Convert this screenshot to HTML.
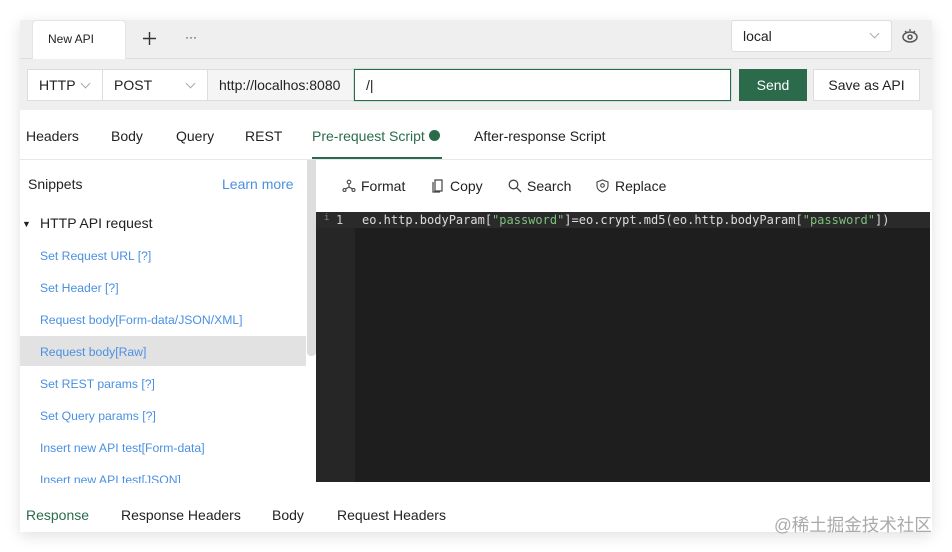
<!DOCTYPE html>
<html><head><meta charset="utf-8"><style>
*{box-sizing:border-box;margin:0;padding:0}
body{width:952px;height:552px;background:#fff;font-family:"Liberation Sans",sans-serif;font-size:14px;color:#222;position:relative;overflow:hidden}
.abs{position:absolute}
.win{position:absolute;left:20px;top:20px;width:912px;height:512px;background:#fff;box-shadow:0 4px 14px rgba(0,0,0,.12)}
.sel{position:absolute;background:#fff;border:1px solid #ddd;font-size:14px;padding-left:11px;line-height:31px}
.chev{position:absolute;width:7px;height:7px;border-right:1px solid #aaa;border-bottom:1px solid #aaa;transform:rotate(45deg)}
.tab{position:absolute;top:128px;font-size:14px}
.tool{position:absolute;top:178px;font-size:14px}
.sn{position:absolute;left:40px;font-size:12.2px;color:#4a90e2}
.mono{font-family:"DejaVu Sans Mono","Liberation Mono",monospace;font-size:12px}
</style></head><body>
<div class="win"></div>
<div class="abs" style="left:20px;top:20px;width:912px;height:90px;background:#efefef"></div>
<div class="abs" style="left:20px;top:58px;width:912px;height:1px;background:#ddd"></div>
<div class="abs" style="left:32px;top:20px;width:94px;height:39px;background:#fff;border-radius:4px 4px 0 0;border:1px solid #e4e4e4;border-bottom:none"></div>
<div class="abs" style="left:48px;top:32px;font-size:12px">New API</div>
<svg class="abs" style="left:143px;top:32px" width="13" height="13" viewBox="0 0 13 13"><path d="M6.5 0v13M0 6.5h13" stroke="#333" stroke-width="1.4"/></svg>
<div class="abs" style="left:185px;top:30px;font-size:12px;color:#333">···</div>
<div class="sel" style="left:731px;top:20px;width:161px;height:32px;border-radius:3px">local</div>
<div class="chev" style="left:871px;top:30px"></div>
<svg class="abs" style="left:901px;top:28px" width="18" height="17" viewBox="0 0 18 17"><ellipse cx="9" cy="9" rx="7" ry="5" fill="none" stroke="#555" stroke-width="1.5"/><circle cx="9" cy="9" r="2" fill="none" stroke="#555" stroke-width="1.5"/><path d="M4 3l1.5 1.5M14 3l-1.5 1.5M9 1v2" stroke="#555" stroke-width="1.3"/></svg>

<div class="sel" style="left:27px;top:69px;width:76px;height:32px">HTTP</div>
<div class="chev" style="left:82px;top:80px"></div>
<div class="sel" style="left:102px;top:69px;width:106px;height:32px">POST</div>
<div class="chev" style="left:187px;top:80px"></div>
<div class="abs" style="left:207px;top:69px;width:147px;height:32px;background:#f5f5f5;border:1px solid #ddd;line-height:31px;padding-left:11px;font-size:14px">http://localhos:8080</div>
<div class="abs" style="left:354px;top:69px;width:377px;height:32px;background:#fff;border:1px solid #2b6b4c;box-shadow:0 0 0 1px #cfe3d8;padding-left:11px;line-height:30px">/|</div>
<div class="abs" style="left:739px;top:69px;width:68px;height:32px;background:#2b6b4c;color:#fff;text-align:center;line-height:32px">Send</div>
<div class="abs" style="left:813px;top:69px;width:107px;height:32px;background:#fff;border:1px solid #ddd;text-align:center;line-height:30px">Save as API</div>

<div class="tab" style="left:26px">Headers</div>
<div class="tab" style="left:111px">Body</div>
<div class="tab" style="left:176px">Query</div>
<div class="tab" style="left:245px">REST</div>
<div class="tab" style="left:312px;color:#2b6b4c">Pre-request Script</div>
<div class="abs" style="left:429px;top:130px;width:11px;height:11px;border-radius:50%;background:#2b6b4c"></div>
<div class="abs" style="left:312px;top:157px;width:130px;height:2px;background:#2b6b4c"></div>
<div class="tab" style="left:474px">After-response Script</div>
<div class="abs" style="left:20px;top:159px;width:912px;height:1px;background:#e8e8e8"></div>

<div class="abs" style="left:28px;top:176px">Snippets</div>
<div class="abs" style="left:222px;top:176px;color:#4a90e2">Learn more</div>
<div class="abs" style="left:22px;top:219px;font-size:9px">▼</div>
<div class="abs" style="left:40px;top:215px">HTTP API request</div>
<div class="abs" style="left:20px;top:336px;width:286px;height:30px;background:#e2e2e2"></div>
<div class="sn" style="top:249px">Set Request URL [?]</div>
<div class="sn" style="top:281px">Set Header [?]</div>
<div class="sn" style="top:313px">Request body[Form-data/JSON/XML]</div>
<div class="sn" style="top:345px">Request body[Raw]</div>
<div class="sn" style="top:377px">Set REST params [?]</div>
<div class="sn" style="top:409px">Set Query params [?]</div>
<div class="sn" style="top:441px">Insert new API test[Form-data]</div>
<div class="abs" style="left:20px;top:470px;width:290px;height:13px;overflow:hidden"><div class="sn" style="left:20px;top:3px">Insert new API test[JSON]</div></div>
<div class="abs" style="left:307px;top:160px;width:9px;height:196px;background:#ddd;border-radius:0 0 4px 4px"></div>
<div class="abs" style="left:316px;top:160px;width:614px;height:52px;background:#fff"></div>

<svg class="abs" style="left:342px;top:179px" width="14" height="14" viewBox="0 0 14 14" fill="none" stroke="#444" stroke-width="1.1"><circle cx="7" cy="3" r="1.8"/><circle cx="2.5" cy="11" r="1.5"/><circle cx="11.5" cy="11" r="1.5"/><path d="M7 5v3M7 8L3.5 10M7 8l3.5 2"/></svg>
<div class="tool" style="left:361px">Format</div>
<svg class="abs" style="left:431px;top:179px" width="13" height="14" viewBox="0 0 13 14" fill="none" stroke="#444" stroke-width="1.2"><path d="M4 1h7v11H4z"/><path d="M2 3v10h7"/></svg>
<div class="tool" style="left:450px">Copy</div>
<svg class="abs" style="left:508px;top:179px" width="14" height="14" viewBox="0 0 14 14" fill="none" stroke="#444" stroke-width="1.3"><circle cx="5.5" cy="5.5" r="4.3"/><path d="M8.7 8.7L13 13"/></svg>
<div class="tool" style="left:527px">Search</div>
<svg class="abs" style="left:596px;top:179px" width="13" height="14" viewBox="0 0 13 14" fill="none" stroke="#444" stroke-width="1.1"><path d="M6.5 1L12 3v4c0 3-2.5 5-5.5 6C3.5 12 1 10 1 7V3z"/><circle cx="6.5" cy="6.5" r="1.8"/></svg>
<div class="tool" style="left:615px">Replace</div>

<div class="abs" style="left:316px;top:212px;width:614px;height:270px;background:#1e1e1e"></div>
<div class="abs" style="left:316px;top:212px;width:39px;height:270px;background:#262626"></div>
<div class="abs" style="left:316px;top:212px;width:614px;height:16px;background:#2a2a2a"></div>
<div class="abs mono" style="left:324px;top:213px;color:#888;font-size:9px">i</div>
<div class="abs mono" style="left:336px;top:213px;color:#ccc">1</div>
<div class="abs mono" style="left:362px;top:213px;color:#ddd;white-space:pre">eo.http.bodyParam[<span style="color:#7ec07e">"password"</span>]=eo.crypt.md5(eo.http.bodyParam[<span style="color:#7ec07e">"password"</span>])</div>

<div class="abs" style="left:26px;top:507px;color:#2b6b4c">Response</div>
<div class="abs" style="left:121px;top:507px">Response Headers</div>
<div class="abs" style="left:272px;top:507px">Body</div>
<div class="abs" style="left:337px;top:507px">Request Headers</div>
<div class="abs" style="left:774px;top:512px;font-size:17.5px;color:#aaa;font-family:'Liberation Sans','Noto Sans CJK SC',sans-serif">@稀土掘金技术社区</div>
</body></html>
